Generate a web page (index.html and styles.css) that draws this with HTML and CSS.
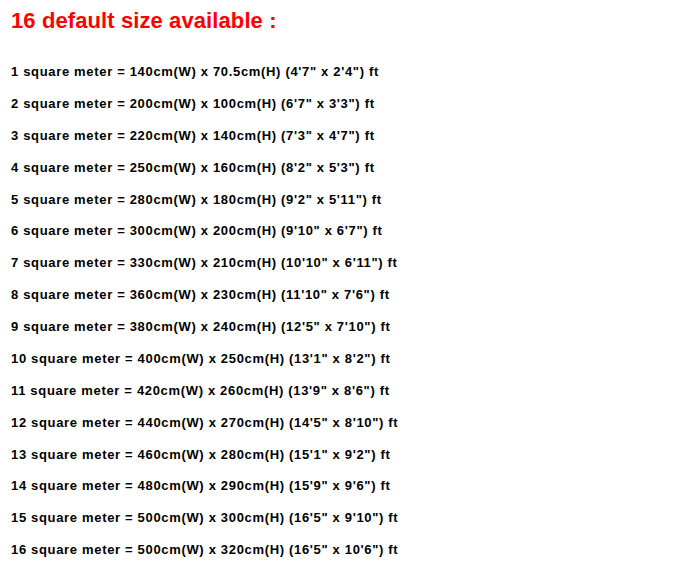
FILE: index.html
```html
<!DOCTYPE html>
<html lang="en">
<head>
    <meta charset="UTF-8">
    <title>Default sizes</title>
    <link rel="stylesheet" href="styles.css">
</head>
<body>
    <div class="sizes">
        <h2 class="sizes-title">16 default size available :</h2>
        <ul class="size-list">
            <li>1 square meter = 140cm(W) x 70.5cm(H) (4'7" x 2'4") ft</li>
            <li>2 square meter = 200cm(W) x 100cm(H) (6'7" x 3'3") ft</li>
            <li>3 square meter = 220cm(W) x 140cm(H) (7'3" x 4'7") ft</li>
            <li>4 square meter = 250cm(W) x 160cm(H) (8'2" x 5'3") ft</li>
            <li>5 square meter = 280cm(W) x 180cm(H) (9'2" x 5'11") ft</li>
            <li>6 square meter = 300cm(W) x 200cm(H) (9'10" x 6'7") ft</li>
            <li>7 square meter = 330cm(W) x 210cm(H) (10'10" x 6'11") ft</li>
            <li>8 square meter = 360cm(W) x 230cm(H) (11'10" x 7'6") ft</li>
            <li>9 square meter = 380cm(W) x 240cm(H) (12'5" x 7'10") ft</li>
            <li>10 square meter = 400cm(W) x 250cm(H) (13'1" x 8'2") ft</li>
            <li>11 square meter = 420cm(W) x 260cm(H) (13'9" x 8'6") ft</li>
            <li>12 square meter = 440cm(W) x 270cm(H) (14'5" x 8'10") ft</li>
            <li>13 square meter = 460cm(W) x 280cm(H) (15'1" x 9'2") ft</li>
            <li>14 square meter = 480cm(W) x 290cm(H) (15'9" x 9'6") ft</li>
            <li>15 square meter = 500cm(W) x 300cm(H) (16'5" x 9'10") ft</li>
            <li>16 square meter = 500cm(W) x 320cm(H) (16'5" x 10'6") ft</li>
        </ul>
    </div>
</body>
</html>
```

FILE: styles.css
```css
* {
    margin: 0;
    padding: 0;
    box-sizing: border-box;
}

body {
    font-family: "Liberation Sans", Arial, sans-serif;
    background: #fff;
    color: #000;
}

.sizes {
    padding: 8px 11px;
}

.sizes-title {
    color: #ff0000;
    font-size: 22px;
    font-weight: bold;
    letter-spacing: 0.1px;
    line-height: 26px;
    margin-bottom: 22px;
}

.size-list {
    list-style: none;
}

.size-list li {
    font-size: 13px;
    font-weight: bold;
    letter-spacing: 0.67px;
    line-height: 31.87px;
}
```
